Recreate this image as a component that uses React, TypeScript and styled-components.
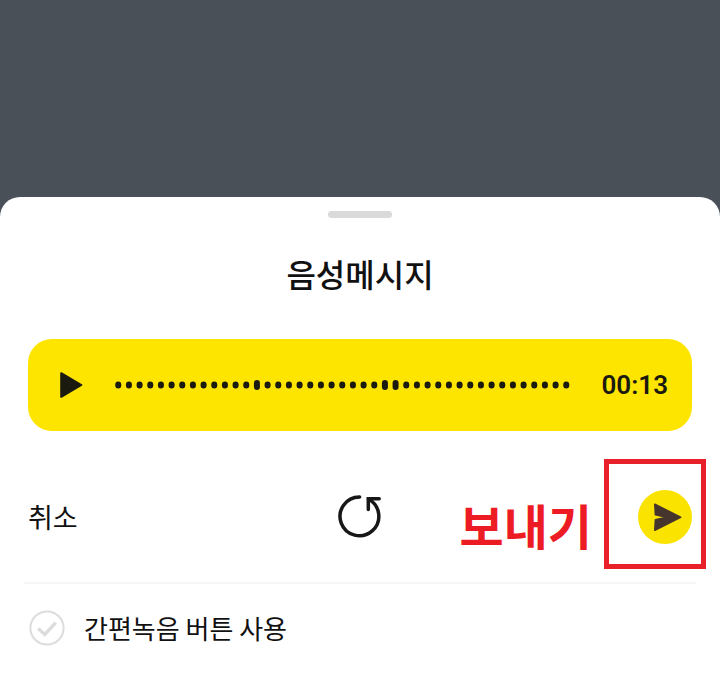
import { useState } from "react";
import styled, { createGlobalStyle } from "styled-components";

const GlobalStyle = createGlobalStyle`
  * {
    box-sizing: border-box;
  }
  body {
    margin: 0;
    background: #495058;
    color: #111;
    font-family: "Noto Sans CJK KR", sans-serif;
  }
  button {
    padding: 0;
    border: 0;
    background: none;
    color: inherit;
    font: inherit;
    cursor: pointer;
  }
  svg {
    display: block;
  }
`;

const Screen = styled.main`
  display: flex;
  flex-direction: column;
  min-height: 100vh;
  padding-top: 197px;
`;

const Sheet = styled.section`
  display: flex;
  flex: 1;
  flex-direction: column;
  padding: 14px 28px 32px;
  border-radius: 20px 20px 0 0;
  background: #fff;
`;

const Handle = styled.div`
  align-self: center;
  width: 64px;
  height: 7px;
  border-radius: 4px;
  background: #dadada;
`;

const Title = styled.h1`
  margin: 31px 0 42px;
  font-size: 32px;
  font-weight: 500;
  line-height: 48px;
  text-align: center;
`;

const Player = styled.div`
  display: flex;
  align-items: center;
  gap: 32px;
  height: 92px;
  padding: 0 24px 0 32px;
  border-radius: 24px;
  background: #fee500;
  color: #1b1a0e;
`;

const Waveform = styled.svg`
  flex: 1;
  min-width: 0;
  height: 12px;
`;

const Duration = styled.time`
  font-family: Roboto, sans-serif;
  font-size: 26px;
  font-weight: 600;
  line-height: 32px;
`;

const Actions = styled.div`
  display: grid;
  grid-template-columns: 1fr auto 1fr;
  align-items: center;
  height: 151px;
  padding-top: 20px;
`;

const CancelButton = styled.button`
  justify-self: start;
  font-size: 27px;
  line-height: 40px;
`;

const SendArea = styled.div`
  position: relative;
  justify-self: end;
`;

const SendButton = styled.button`
  display: grid;
  place-items: center;
  width: 54px;
  height: 54px;
  border-radius: 50%;
  background: #fbe300;
`;

const HighlightFrame = styled.div`
  position: absolute;
  inset: -31px -14px -25px -34px;
  border: 5px solid #e8202a;
  pointer-events: none;
`;

const HighlightLabel = styled.span`
  position: absolute;
  top: -2px;
  right: 100px;
  color: #ed1c24;
  font-size: 48px;
  font-weight: 700;
  line-height: 72px;
  white-space: nowrap;
  pointer-events: none;
`;

const Divider = styled.hr`
  width: calc(100% + 8px);
  height: 2px;
  margin: 0 -4px;
  border: 0;
  background: #f6f6f6;
`;

const Option = styled.label`
  display: flex;
  align-items: center;
  align-self: flex-start;
  gap: 18px;
  margin-top: 24px;
  font-size: 26px;
  line-height: 40px;
  cursor: pointer;
`;

const CheckBox = styled.span`
  position: relative;
  width: 38px;
  height: 38px;
  color: #dcdcdc;

  &:has(input:checked) {
    color: #3c1e1e;
  }
`;

const CheckInput = styled.input`
  position: absolute;
  inset: 0;
  width: 100%;
  height: 100%;
  margin: 0;
  opacity: 0;
  cursor: pointer;
`;

const BAR_COUNT = 43;
const LOUD_BARS = [13, 25, 26];
const bars = Array.from({ length: BAR_COUNT }, (_, i) => (LOUD_BARS.includes(i) ? 10 : 7));

export default function App() {
  const [simpleRecord, setSimpleRecord] = useState(false);

  return (
    <>
      <GlobalStyle />
      <Screen>
        <Sheet>
          <Handle />
          <Title>음성메시지</Title>
          <Player>
            <button type="button" aria-label="재생">
              <svg width="23" height="28" viewBox="0 0 23 28">
                <path
                  d="M1.2 2.2 21.4 14 1.2 25.8Z"
                  fill="currentColor"
                  stroke="currentColor"
                  strokeWidth="2"
                  strokeLinejoin="round"
                />
              </svg>
            </button>
            <Waveform viewBox="0 0 454 12" aria-hidden="true">
              {bars.map((height, i) => (
                <rect
                  key={i}
                  x={(i * 448) / (BAR_COUNT - 1)}
                  y={6 - height / 2}
                  width="6"
                  height={height}
                  rx="3"
                  fill="currentColor"
                />
              ))}
            </Waveform>
            <Duration>00:13</Duration>
          </Player>
          <Actions>
            <CancelButton type="button">취소</CancelButton>
            <button type="button" aria-label="다시 녹음">
              <svg
                width="44"
                height="44"
                viewBox="0 0 44 44"
                fill="none"
                stroke="#171717"
                strokeWidth="3.5"
                strokeLinecap="round"
              >
                <path d="M21.6 1.9A19.4 19.4 0 1 0 30.6 4.2" />
                <path d="M30.3 14.6V3.8H41.2" />
              </svg>
            </button>
            <SendArea>
              <SendButton type="button" aria-label="보내기">
                <svg width="54" height="54" viewBox="0 0 54 54">
                  <path
                    d="M16.8 14.2 42.6 27.2 16.8 40.2 17.4 29.8 28.4 27.2 17.4 24.6Z"
                    fill="#46352c"
                    stroke="#46352c"
                    strokeWidth="1.6"
                    strokeLinejoin="round"
                  />
                </svg>
              </SendButton>
              <HighlightFrame />
              <HighlightLabel>보내기</HighlightLabel>
            </SendArea>
          </Actions>
          <Divider />
          <Option>
            <CheckBox>
              <CheckInput
                type="checkbox"
                checked={simpleRecord}
                onChange={(event) => setSimpleRecord(event.target.checked)}
              />
              <svg width="38" height="38" viewBox="0 0 38 38" fill="none" stroke="currentColor">
                <circle cx="19" cy="19" r="16.6" strokeWidth="2" />
                <path d="M10.2 19.4 16.8 25.4 27.8 13.6" strokeWidth="3.4" />
              </svg>
            </CheckBox>
            간편녹음 버튼 사용
          </Option>
        </Sheet>
      </Screen>
    </>
  );
}
